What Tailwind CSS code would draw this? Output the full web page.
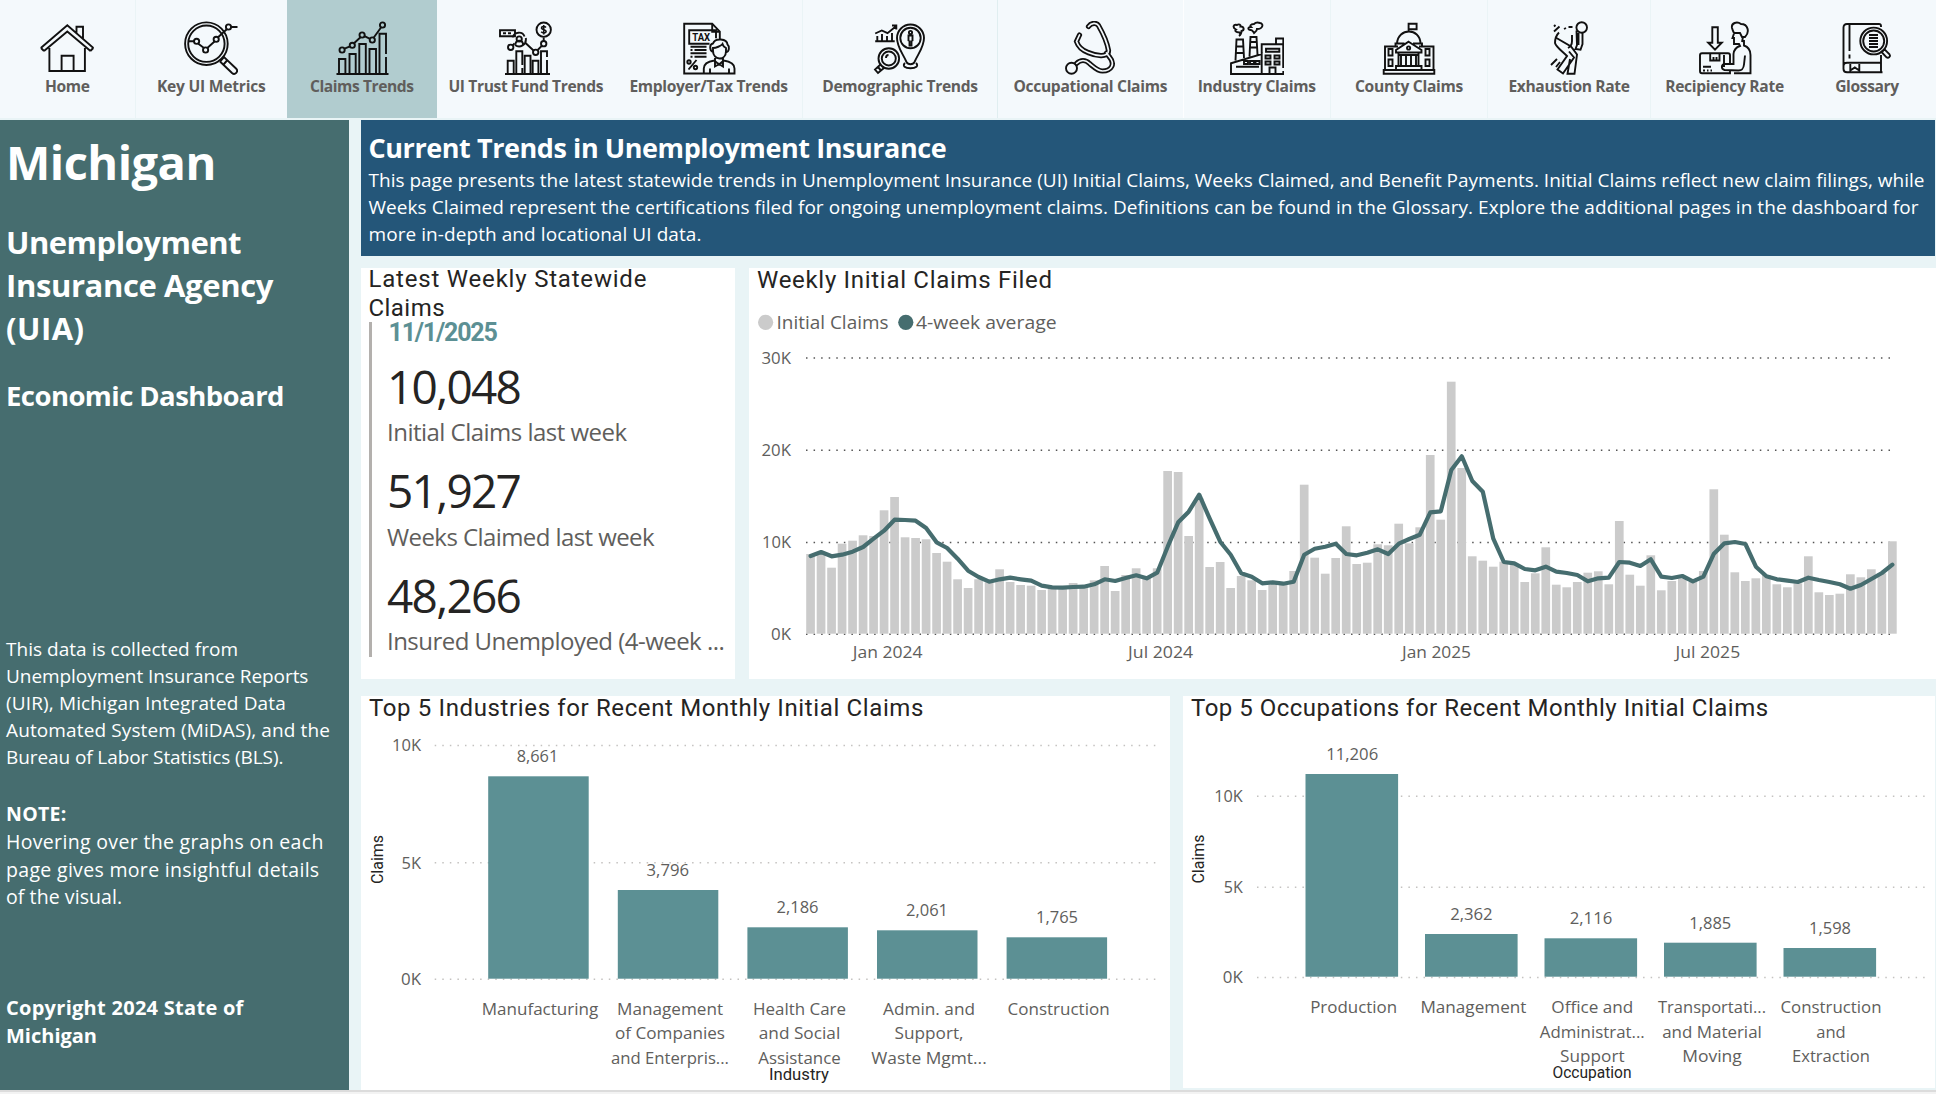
<!DOCTYPE html>
<html lang="en">
<head>
<meta charset="utf-8">
<title>Michigan UIA Economic Dashboard</title>
<script src="https://cdn.jsdelivr.net/npm/@tailwindcss/browser@4"></script>
</head>
<body class="w-[1936px] h-[1094px] overflow-hidden bg-[#e9f4f6] font-['Open_Sans',sans-serif] flex flex-col">

<nav class="flex h-[118px] shrink-0 bg-[#f4f9fc] text-[15.6px] font-bold text-[#605e5c] leading-[20px] [&_svg]:w-[54px] [&_svg]:h-[54px] [&_svg]:fill-none [&_svg]:stroke-[#111] [&_svg]:[stroke-width:1.9] [&>a]:flex [&>a]:flex-col [&>a]:items-center [&>a]:pt-[21px] [&>a]:shrink-0 [&_span]:mt-[1px] [&_span]:whitespace-nowrap">
  <a class="w-[135.5px] border-r border-[#eaf4f6]">
    <svg viewBox="0 0 54 54"><path d="M.8 27 27.3 4.3 53.5 27M4 30 27.3 10.5 50.500 30M1 27l3 3M53.300 27l-3 3M36.500 12V5.800h6.500V18M9.400 27V50h35.500V27M21.600 50V34.700h12V50"/></svg><span class="tracking-[-0.37px]">Home</span></a>
  <a class="w-[151.5px]">
    <svg viewBox="0 0 54 54"><circle cx="22.400" cy="22.700" r="21.300"/><circle cx="22.400" cy="22.700" r="18.200"/><circle cx="12.600" cy="20.300" r="2.600"/><circle cx="21.600" cy="29" r="2.600"/><circle cx="32.200" cy="18.300" r="2.600"/><circle cx="44.500" cy="6" r="2.600"/><path d="M4.500 20.300h5.500M14 22.500l6 4.500M23.300 27l7.200-6.500M34 16.200l8.800-8M47 6h6.500M36 40.500l4-4.500 12 11.500c3 3-1 7-4 4.500L36 40.500M39.500 43.500l4-4.500"/></svg><span class="tracking-[-0.22px]">Key UI Metrics</span></a>
  <a class="w-[149.5px] bg-[#b1cccf]">
    <svg viewBox="0 0 54 54"><path d="M1.500 53h52M4 53V38h6.400v15M14.500 53V33h6.200v20M24.300 53V23h6.500v30M34.500 53V28h6.500v25M44.500 53V12.700h6.500V33M51 36v17M9.500 27.700l5.500-2.300M19 22.200l6.500-6M29.500 15.200l5.500 2.700M38.600 16.700l7.600-10.400"/><circle cx="7.100" cy="29" r="2.600"/><circle cx="17.300" cy="24.300" r="2.600"/><circle cx="27.100" cy="14" r="2.600"/><circle cx="37.300" cy="19" r="2.600"/><circle cx="47.500" cy="4" r="2.600"/></svg><span class="tracking-[-0.43px]">Claims Trends</span></a>
  <a class="w-[178.5px]">
    <svg viewBox="0 0 54 54"><path d="M6 53h45M8.700 53V39.700h6V53M17.300 53V30.300h6V44M23.300 47v6M25.700 53V34.700h5.800V53M33.700 53V39.700h5.700V53M42 53V30.300h6V36M48 39v14M1 9.300h15v6H1zM4 12.300h3M9 12.300h3M44.700 16.500v3.500M26 21.500l8.500 8M38.700 29l4.300-4.300M13.500 24.500l2-2M13.500 16.500c2-6 10-6.500 12-1M26.800 17c1 7-6 10.500-10.800 7M16.500 23.500c0-5 7.500-5 7.500 0"/><circle cx="20.200" cy="18" r="2.600"/><circle cx="11.700" cy="26.300" r="2.700"/><circle cx="36.700" cy="31.300" r="2.700"/><circle cx="44.700" cy="22.700" r="2.700"/><circle cx="44.700" cy="8.700" r="7.200"/><path d="M47 6.500c-1.500-1.800-4.700-1-4.500.6.300 2 4.500 1.400 4.600 3.300 0 1.700-3.300 2.200-4.900.4M44.700 4v9.500" stroke-width="1.600"/></svg><span class="tracking-[-0.37px]">UI Trust Fund Trends</span></a>
  <a class="w-[188px] border-r border-[#eaf4f6]">
    <svg viewBox="0 0 54 54"><path d="M22 52.500H2.200V2.700h28l7.600 8v7M30.200 2.700v8h7.600M27.500 22.700H7.200V9.300H34v8M8.500 25.700h16M8.500 29h2M12.500 29h12M8.500 32.300h16M8.500 35.700h2M12.500 35.700h12M6.500 48.500l8-9.500M21.800 52.500v-5c0-4 4-7 10.500-8l4.700 4 4.700-4c6.500 1 10.800 4 10.800 8v5zM28 47.500v5M47 47.500v5M33 40v5.500l8-4.500v4.500l-8-5M33 40v-3M41 40v-3M31 27c3 0 8-2 9.500-4 .5 2 1.500 3 3.500 4v3c0 5-3 7.500-6.500 7.500S31 34.500 31 30zM31 31c-4-2-3.500-8 0-8.500 2-6 14-5 14.500 1 2.500 2 1.500 7-1 7.500"/><circle cx="7" cy="41" r="1.700"/><circle cx="13.500" cy="46.500" r="1.700"/><text x="10.200" y="20" class="fill-[#111] font-['Roboto'] text-[11px] font-bold [stroke-width:0]" textLength="18" lengthAdjust="spacingAndGlyphs">TAX</text></svg><span class="tracking-[-0.34px]">Employer/Tax Trends</span></a>
  <a class="w-[195px] border-r border-[#e0eef0]">
    <svg viewBox="0 0 54 54"><path d="M2.200 20.300h19.500M4.300 20v-5M9 20v-7M14 20v-5M19 20v-8M2.200 12.500l6.600-3 5.700 2.700L23 5.300M19 4.500h4.300v4M33.500 41c-4-9-9.500-15-9.500-24a13.500 13.500 0 0 1 27 0c0 9-5.500 15-9.500 24-1.500 3-6.500 3-8 0M32 42c-3 3 0 5.300 5.500 5.300s8.500-2.300 5.500-5.300M7.500 43.500l-5.500 5 3 3.500 6-5M4.500 45.500l4 4.500M13 37c0-2 1-3 2.500-3"/><circle cx="37.500" cy="17" r="10.200"/><circle cx="37.500" cy="11.500" r="1.600"/><path d="M35.500 14.500h4v5l-1 .5v4.500h-2V20l-1-.5z"/><circle cx="15.800" cy="37.500" r="10.300"/><circle cx="15.800" cy="37.500" r="7"/></svg><span class="tracking-[-0.31px]">Demographic Trends</span></a>
  <a class="w-[185.5px] border-r border-[#fdfeff]">
    <svg viewBox="0 0 54 54" stroke-linecap="round"><g stroke-width="5.200"><path d="M25.500 5.500c3-4 8-4 10-1 4 7 8.500 16 10 25 0 8-13.500 5-20.500 2-8-3-10.500-8-11.500-11l3-6.500"/><path d="M13.500 42.500c4-4 9-4 13 0 5 4 8 7.500 13 7.500 9 0 13-7 7-14l-3-4"/></g><g class="stroke-[#f4f9fc]" stroke-width="1.700"><path d="M25.500 5.500c3-4 8-4 10-1 4 7 8.500 16 10 25 0 8-13.500 5-20.500 2-8-3-10.500-8-11.500-11l3-6.500"/><path d="M13.500 42.500c4-4 9-4 13 0 5 4 8 7.500 13 7.500 9 0 13-7 7-14l-3-4"/></g><circle cx="8.500" cy="47.300" r="5.500" class="fill-[#f4f9fc]"/></svg><span class="tracking-[-0.31px]">Occupational Claims</span></a>
  <a class="w-[147.500px] border-r border-[#eaf4f6]">
    <svg viewBox="0 0 54 54"><path d="M1 53V42.300L31.700 33v20zM31.700 53V23.300h21.500V47M53.300 50v3H31.700M46 23v-5.500h7.300V23M5.500 39.500l1-21h6.500l1 18.500M6.500 25.500h7M6 32h7.500M19.500 35.500l1-19.500h6l1 17.500M20.500 21h6.500M20 26.500h7M36 27.700h13.300v3H36zM35.500 34.500h5v3h-5zM44.500 34.500h5v3h-5zM35.500 40.500h5v3h-5zM44.500 40.500h5v3h-5zM39.500 53v-6.500h6V53M14 40h4v3h-4zM20 40h4v3h-4zM25.500 40h4v3h-4zM6 45.700h23M9 15c2-1 1.500-2 .5-3.500-4 0-5-2-3.500-3-4-2-2.500-5.500 1-4.500 2-1.500 4 0 3.500 1.500 4 0 4 4 1 4.500 0 2-1 4-2.500 5zM24 12c1-1 3-2 3-4 6 0 7-5.500 3-6-3-1-5 0-6 1-4 0-4 2-3 3-4 0-3 3.500 0 3 1.500 0 2 1.500 3 3z"/></svg><span class="tracking-[-0.26px]">Industry Claims</span></a>
  <a class="w-[157px] border-r border-[#eaf4f6]">
    <svg viewBox="0 0 54 54"><path d="M1.700 49h50.600v3.700H1.700zM3 49V25.500h13M37 25.500h14.500V49M26.600 10.500V2.700h8v5.500h-8M15 22.500c1-16 23-16 23.500 0M13.500 25.500v-3h9M31 22.500h9v3M26.600 20.700 39.500 29v2.500H14V29zM16.500 31.500V45M19 33v12M36.500 31.500V45M34 33v12M24 33.500V44M29 33.500V44M14 49v-4h25.500v4M17 34h19M6.500 28h4v6.500h-4zM6.500 38.500h4V45h-4zM43.500 28h4v6.500h-4zM43.500 38.500h4V45h-4z"/><circle cx="26.600" cy="27" r="1.600"/></svg><span class="tracking-[-0.27px]">County Claims</span></a>
  <a class="w-[163px] border-r border-[#eaf4f6]">
    <svg viewBox="0 0 54 54"><circle cx="39.700" cy="6.500" r="5.300"/><path d="M34.500 9.500 35 24l-1.500 4 5 .8 2-5.800V12M36.500 12v12M17 11.500c-3 3-4 6-4 10.500 1 4 7 8 12 13l-9.500 13.500 5.500 4 11-16-5-6M14.500 17l14.500 8.500 6 8-2.500 19.300h-7L28 38M30 14v6c0 3-2 6-4 7M22 8l2-1M26.500 6h4M12 10.500l5.500-5M12 5.500l1.500-1.500M9 44l6-6M14 46l4-5"/></svg><span class="tracking-[-0.37px]">Exhaustion Rate</span></a>
  <a class="w-[147px]">
    <svg viewBox="0 0 54 54"><path d="M14.300 6.300h5.500v15.400h4L17 28.700l-6.800-7h4.100zM26 46V34M2 34.300c0-1.300.7-2 2-2h26c1.300 0 2 .7 2 2V44M2 34v16c0 1.500.7 2.300 2 2.300h28V49M12.200 32.500v7h9.300v-7M15.500 36v3M18.500 36v3M5 45.700h8M5 49.500h2M9 49.500h1.500M12.500 49.500H14M36 52.300h16.500V34c0-5-2-8-6.500-9.500V19M36 12.500l-1.500 4.500h1.500v6h5l1 2c-3 1-6 3-6.500 8v10h-9c-3.500 1-3.500 5 0 6l14 .5c4 0 5-2 5.500-6l1-9M36 12h6l2 4h3c5-5 3-13-4-13-4-3-10-1-9 4 .5 2 1 3 2 5M45 16l-1 5"/></svg><span class="tracking-[-0.29px]">Recipiency Rate</span></a>
  <a class="w-[138px]">
    <svg viewBox="0 0 54 54"><path d="M41 6V5c0-1.300-.7-2-2-2H7C4.700 3 3.500 4.200 3.500 6.500V48c0 2.300 1.200 3.300 3.500 3.300h35.500M41 51V42M41 34v7.700H7c-2.300 0-3.500 1-3.500 3M9.500 3.500V30M9.500 33.500v4M10.300 43v6.500l4.500-3 4.500 3V43M29 14h9M29 17h9M29 20h9M29 23h9M29 26h9M41.500 31l3-2.700 5 5c1.500 2-1 4.500-3 3z"/><circle cx="33.700" cy="20" r="13.400"/><circle cx="33.700" cy="20" r="10.500"/></svg><span class="tracking-[-0.37px]">Glossary</span></a>
</nav>

<div class="flex h-[970px] mt-[2px] shrink-0">
  <aside class="w-[349px] shrink-0 bg-[#466d6f] text-white pl-[6px] pt-[12px] whitespace-nowrap [&_span]:block [&_span]:w-max">
    <h1 class="text-[47px] leading-[60px] font-bold"><span class="tracking-[-0.5px]">Michigan</span></h1>
    <h2 class="mt-[29px] text-[31px] leading-[43px] font-bold"><span class="tracking-[-0.5px]">Unemployment</span><span class="tracking-[-0.38px]">Insurance Agency</span><span class="tracking-[0.48px]">(UIA)</span></h2>
    <h3 class="mt-[27.5px] text-[27.5px] leading-[36px] font-bold"><span class="tracking-[-0.56px]">Economic Dashboard</span></h3>
    <p class="mt-[222.5px] text-[19px] leading-[27.1px]"><span class="tracking-[0.03px]">This data is collected from</span><span class="tracking-[-0.06px]">Unemployment Insurance Reports</span><span class="tracking-[0.14px]">(UIR), Michigan Integrated Data</span><span class="tracking-[0.12px]">Automated System (MiDAS), and the</span><span class="tracking-[-0.09px]">Bureau of Labor Statistics (BLS).</span></p>
    <p class="mt-[28.5px] text-[19.5px] leading-[27.8px]"><span class="font-bold tracking-[0.3px]">NOTE:</span><span class="tracking-[0.33px]">Hovering over the graphs on each</span><span class="tracking-[0.32px]">page gives more insightful details</span><span class="tracking-[0.08px]">of the visual.</span></p>
    <p class="mt-[83px] text-[20px] leading-[27.8px] font-bold"><span class="tracking-[0.28px]">Copyright 2024 State of</span><span>Michigan</span></p>
  </aside>

  <main class="ml-[12px] w-[1575px] flex flex-col">
    <header class="h-[135.5px] mr-[1px] shrink-0 bg-[#245679] text-white pl-[7.5px] pt-[11.5px] whitespace-nowrap [&_span]:block [&_span]:w-max">
      <h2 class="text-[27px] leading-[32px] font-bold"><span class="tracking-[-0.43px]">Current Trends in Unemployment Insurance</span></h2>
      <p class="mt-[3px] text-[19px] leading-[27px]"><span class="tracking-[0.005px]">This page presents the latest statewide trends in Unemployment Insurance (UI) Initial Claims, Weeks Claimed, and Benefit Payments. Initial Claims reflect new claim filings, while</span><span class="tracking-[0.046px]">Weeks Claimed represent the certifications filed for ongoing unemployment claims. Definitions can be found in the Glossary. Explore the additional pages in the dashboard for</span><span class="tracking-[0.07px]">more in-depth and locational UI data.</span></p>
    </header>

    <div class="flex mt-[12.5px] gap-[14px] h-[411px] shrink-0">
      <section class="w-[374px] shrink-0 bg-white pl-[7.5px] whitespace-nowrap [&_span]:block [&_span]:w-max">
        <h3 class="h-[54px] font-['Roboto'] text-[24px] leading-[29.3px] text-[#252423]"><span class="-translate-y-[3px] tracking-[0.8px]">Latest Weekly Statewide</span><span class="-translate-y-[3px] tracking-[0.45px]">Claims</span></h3>
        <div class="h-[335px] border-l-[3px] border-[#b3b0ad] pl-[15.5px]">
          <p class="font-['Roboto'] text-[25px] leading-[20px] font-bold text-[#5c9094] pt-[1px] pl-[1.5px]"><span class="tracking-[-1.2px]">11/1/2025</span></p>
          <div class="mt-[17.5px]">
            <p class="text-[46px] leading-[50px] text-[#252423]"><span class="tracking-[-1.7px]">10,048</span></p>
            <p class="mt-[6.5px] text-[24px] leading-[30px] text-[#605e5c]"><span class="tracking-[-0.52px]">Initial Claims last week</span></p>
          </div>
          <div class="mt-[18.2px]">
            <p class="text-[46px] leading-[50px] text-[#252423]"><span class="tracking-[-1.7px]">51,927</span></p>
            <p class="mt-[6.5px] text-[24px] leading-[30px] text-[#605e5c]"><span class="tracking-[-0.58px]">Weeks Claimed last week</span></p>
          </div>
          <div class="mt-[18.2px]">
            <p class="text-[46px] leading-[50px] text-[#252423]"><span class="tracking-[-1.7px]">48,266</span></p>
            <p class="mt-[6.5px] text-[24px] leading-[30px] text-[#605e5c]"><span class="tracking-[-0.53px]">Insured Unemployed (4-week ...</span></p>
          </div>
        </div>
      </section>

      <section class="grow bg-white whitespace-nowrap">
        <h3 class="pl-[8px] font-['Roboto'] text-[24px] leading-[24px] tracking-[0.7px] text-[#252423]">Weekly Initial Claims Filed</h3>
        <svg id="weekly" class="block w-[1187px] h-[387px] fill-[#605e5c]" viewBox="749 292 1187 387"></svg>
      </section>
    </div>

    <div class="flex mt-[17px] gap-[13px] h-[394px] shrink-0">
      <section class="w-[809px] shrink-0 bg-white whitespace-nowrap">
        <h3 class="pl-[8px] font-['Roboto'] text-[24px] leading-[24px] tracking-[0.63px] text-[#252423]">Top 5 Industries for Recent Monthly Initial Claims</h3>
        <svg id="industries" class="block w-[809px] h-[370px] fill-[#605e5c]" viewBox="361 720 809 370"></svg>
      </section>
      <section class="w-[752px] h-[392px] shrink-0 bg-white whitespace-nowrap">
        <h3 class="pl-[8px] font-['Roboto'] text-[24px] leading-[24px] tracking-[0.5px] text-[#252423]">Top 5 Occupations for Recent Monthly Initial Claims</h3>
        <svg id="occupations" class="block w-[752px] h-[368px] fill-[#605e5c]" viewBox="1183 720 752 368"></svg>
      </section>
    </div>
  </main>
</div>
<footer class="h-[4px] shrink-0 bg-[#f3f3f3] border-t-2 border-[#dcdcdc]"></footer>

<script>
const label = (x, y, str, w, size, anchor = 'middle', extra = '') =>
  `<text x="${x}" y="${y}" font-size="${size}" text-anchor="${anchor}" textLength="${w}" lengthAdjust="spacingAndGlyphs" ${extra}>${str}</text>`;
const grid = (x1, x2, y, color) =>
  `<path d="M${x1} ${y}H${x2}" fill="none" stroke="${color}" stroke-width="1.4" stroke-dasharray="1.5 6.070"/>`;

// Weekly chart: heights are in thirds of a pixel, measured from the panel's top edge.
const claims = [912,908,953,881,872,856,858,781,741,862,864,868,909,935,988,1014,988,997,958,996,1005,1007,1020,1015,1012,999,1010,991,948,1023,975,955,985,955,663,666,858,745,951,936,1014,978,991,1020,1000,1003,963,704,923,971,924,829,942,938,883,886,821,880,832,615,809,395,654,919,932,950,935,945,996,970,892,1004,1012,996,968,964,1003,813,974,1007,916,1021,993,985,996,963,718,854,967,993,985,975,1003,1012,1000,919,1027,1035,1031,973,982,958,970,874];
const average = [918,906,919,914,905,891,866,842,809,810,812,834,877,894,926,962,981,995,988,983,988,992,1007,1012,1013,1011,1010,1003,988,993,984,976,985,968,890,817,785,734,806,875,914,970,980,1000,997,1001,995,914,896,890,881,912,916,908,898,912,881,867,854,787,784,660,619,693,725,866,936,940,957,961,950,965,969,975,994,985,983,936,938,948,928,980,984,978,994,980,911,880,876,882,950,979,988,992,996,983,990,996,1003,1016,1005,987,969,944];
const px = i => 810.6 + i * 10.503, py = v => 250 + v / 3;
let s = '';
[[358,'30K',29.5],[450.3,'20K',29.5],[542.5,'10K',29],[634.3,'0K',20]].forEach(([y, t, w]) => {
  s += grid(806, 1891, y, '#555') + label(791, y + 5.7, t, w, 16.5, 'end');
});
claims.forEach((v, i) => s += `<rect x="${(px(i) - 4.4).toFixed(2)}" y="${py(v).toFixed(1)}" width="8.7" height="${(633.7 - py(v)).toFixed(1)}" fill="#cbcbcb"/>`);
s += `<polyline points="${average.map((v, i) => px(i).toFixed(1) + ',' + py(v).toFixed(1)).join(' ')}" fill="none" stroke="#466d6f" stroke-width="4.2" stroke-linejoin="round" stroke-linecap="round"/>`;
s += '<circle cx="765.600" cy="322.300" r="7.600" fill="#cbcbcb"/><circle cx="905.800" cy="322.300" r="7.600" fill="#466d6f"/>';
s += label(776.5, 328.7, 'Initial Claims', 112, 19, 'start') + label(916, 328.7, '4-week average', 140.5, 19, 'start');
s += label(887.7, 657.7, 'Jan 2024', 69.7, 17) + label(1160.6, 657.7, 'Jul 2024', 65, 17) + label(1436.5, 657.7, 'Jan 2025', 69, 17) + label(1707.9, 657.7, 'Jul 2025', 64.6, 17);
document.getElementById('weekly').innerHTML = s;

function columns(id, c) {
  let s = '';
  c.grid.forEach(([y, t, w]) => s += grid(c.x1, c.x2, y, '#c4c2c0') + label(c.tick, y + 5.8, t, w, 16.8, 'end'));
  c.bars.forEach(([top, value, vw, vx, vy, cx, lines], i) => {
    s += `<rect x="${c.bx + i * c.pitch}" y="${top}" width="${c.bw}" height="${c.base - top}" fill="#5c9094"/>`;
    s += label(vx, vy, value, vw, 17);
    lines.forEach(([t, w], k) => s += label(cx, c.cat + k * 24.7, t, w, 17));
  });
  s += label(c.name[1], c.name[2], c.name[0], c.name[3], 16, 'middle', 'font-family="Roboto" fill="#252423"');
  s += label(0, 0, 'Claims', 49, 16, 'middle', `font-family="Roboto" fill="#252423" transform="translate(${c.side}) rotate(-90)"`);
  document.getElementById(id).innerHTML = s;
}
columns('industries', {
  x1: 434.7, x2: 1157, tick: 421, bx: 488.2, bw: 100.5, pitch: 129.6, base: 978.7, cat: 1014.7, side: '383,859.5',
  grid: [[745.5,'10K',29],[862.7,'5K',19.5],[979.3,'0K',20]], name: ['Industry', 799, 1080, 60],
  bars: [
    [776.3,'8,661',41.5,537.5,762,540,[['Manufacturing',116.5]]],
    [890,'3,796',42.5,667.8,876.3,670,[['Management',106],['of Companies',110],['and Enterpris...',118]]],
    [927.3,'2,186',42,797.5,913.3,799.5,[['Health Care',93],['and Social',81.5],['Assistance',82.5]]],
    [930.3,'2,061',42,927,916.3,929,[['Admin. and',92],['Support,',69],['Waste Mgmt...',115.4]]],
    [937.3,'1,765',42,1057,923.3,1058.6,[['Construction',102]]]
  ]
});
columns('occupations', {
  x1: 1257, x2: 1925.7, tick: 1242.8, bx: 1305.5, bw: 92.6, pitch: 119.5, base: 976.7, cat: 1013, side: '1204.2,859',
  grid: [[796.3,'10K',28.6],[887.3,'5K',19],[977.5,'0K',20]], name: ['Occupation', 1592, 1078, 79],
  bars: [
    [774,'11,206',52,1352.2,760,1353.7,[['Production',87]]],
    [934,'2,362',42.5,1471.4,919.7,1473.4,[['Management',106]]],
    [938.3,'2,116',42.5,1591,924,1592.3,[['Office and',82],['Administrat...',105],['Support',64.5]]],
    [942.7,'1,885',42,1710.3,929,1712,[['Transportati...',108],['and Material',99.7],['Moving',59.6]]],
    [948,'1,598',42,1830,934,1831,[['Construction',101],['and',29.5],['Extraction',78]]]
  ]
});
</script>
</body>
</html>
